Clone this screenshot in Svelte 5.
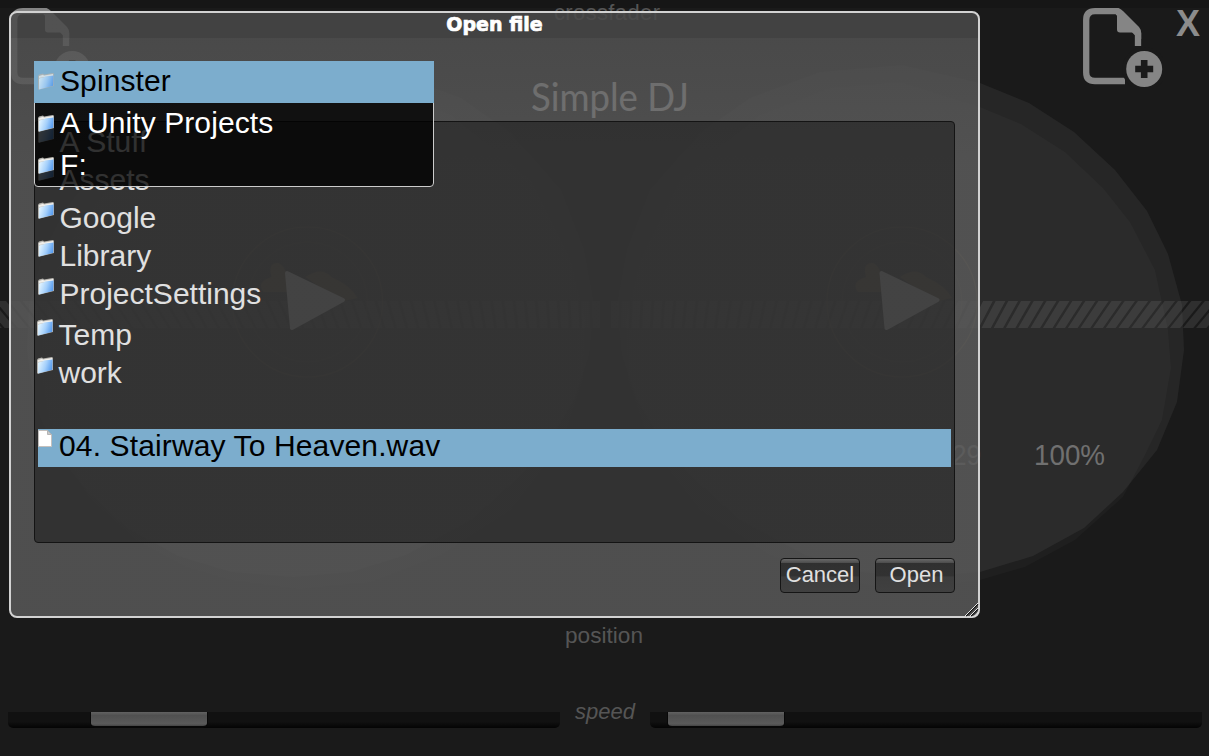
<script lang="ts">
	const places = ['Spinster', 'A Unity Projects', 'F:'];
	const folders = ['A Stuff', 'Assets', 'Google', 'Library', 'ProjectSettings'];
	const moreFolders = ['Temp', 'work'];
	const files = ['04. Stairway To Heaven.wav'];

	let place = $state('Spinster');
	let selected = $state('04. Stairway To Heaven.wav');

	// distance of each thumb from the left end of its track
	const speeds = [82, 17];

	// the waveform bars lean more the further they are from the middle
	const top = (i: number) => 611 + 10.7 * i + 0.029 * i * i;
	const lean = (x: number) => x - (x - 611) * 0.037;
	const bars = Array.from({ length: 54 }, (_, i) => {
		const a = top(i);
		const b = top(i + 1) - 2.9;
		return `${a},301 ${b},301 ${lean(b)},328 ${lean(a)},328`;
	});
</script>

{#snippet folderIcon()}
	<svg class="icon" width="16" height="17" viewBox="0 0 16 17">
		<defs>
			<linearGradient id="folder" x1="0" y1="0.35" x2="1" y2="0.65">
				<stop offset="0" stop-color="#e4f5ff" />
				<stop offset="0.5" stop-color="#a5d0fb" />
				<stop offset="1" stop-color="#4e96ee" />
			</linearGradient>
		</defs>
		<path d="M0 3 L1 1.5 L5 0.6 L6 1.4 L14.8 0 L16 0.8 V13 L1 16.8 L0 16.3Z" fill="#b5b3ae" />
		<path d="M1 2.9 L5 1.8 L6 2.5 L15 1 V3 L1 5Z" fill="#f0efeb" />
		<path d="M1 5.4 L6 4.3 L7 3.4 L15.6 2.4 L15.2 12.8 L1 16.4Z" fill="url(#folder)" />
	</svg>
{/snippet}

{#snippet addFileIcon()}
	<svg class="add-file" width="80" height="79" viewBox="0 0 80 79">
		<path
			d="M42 73 H12 Q3.2 73 3.2 64.4 V12 Q3.2 3.2 12 3.2 H34 L55 26 V38"
			fill="none"
			stroke="#858585"
			stroke-width="6.3"
		/>
		<path d="M34 0 L36.5 0.4 Q38 1 40 3 L56 19 Q58.2 21.5 58.2 25 V31 L52 24.6 H37 Q34 24.6 34 21.6Z" fill="#858585" />
		<circle cx="61.2" cy="61" r="22" fill="#1a1a1a" />
		<circle cx="61.2" cy="61" r="18" fill="#858585" />
		<path d="M61.2 52 V70 M52.2 61 H70.2" stroke="#1a1a1a" stroke-width="6.6" />
	</svg>
{/snippet}

{#snippet deck()}
	<polygon
		class="platter-shade"
		points="900,82 980,107 1021,124 1065,152 1103,188 1130,222 1155,270 1168,330 1171,368 1162,420 1145,455 1123,497 1075,540 1025,567 980,580 912,589 840,582 770,555 700,510 650,445 628,380 626,320 640,260 680,180 760,115 830,88"
	/>
	<polygon
		class="platter"
		points="902,65 980,83 1029,103 1074,132 1115,170 1147,211 1168,254 1182,305 1184,350 1177,402 1157,450 1123,492 1084,528 1033,556 980,572 918,577 860,572 805,555 740,520 690,475 655,430 637,400 622,355 617,305 627,250 650,190 700,133 750,98 820,72"
	/>
	{#each bars as points}
		<polygon class="bar" {points} />
	{/each}
{/snippet}

{#snippet label()}
	<circle cx="902" cy="302" r="75" fill="none" stroke="#8a7244" stroke-width="1.2" opacity="0.35" />
	<circle cx="902" cy="302" r="60" fill="none" stroke="#8a7244" stroke-width="0.8" opacity="0.2" />
	<path
		d="M858 292 Q850 282 866 277 Q862 262 873 263 Q884 268 882 292Z M900 277 Q916 266 926 277 Q946 286 952 298 L935 302Z"
		fill="#8a6a33"
		opacity="0.5"
	/>
	<path d="M881.5 273 L937.5 300 L886.5 328Z" class="play" />
{/snippet}

<main class="app">
	<svg class="scene" width="1209" height="756" viewBox="0 0 1209 756">
		<rect width="1209" height="8" fill="#161616" />
		{@render deck()}
		<g transform="translate(1211 0) scale(-1 1)">{@render deck()}</g>
		{@render label()}
		<g transform="translate(-594.5 0)">{@render label()}</g>
		<text x="554" y="20" class="caption" textLength="106">crossfader</text>
		<text x="531" y="111" class="brand" textLength="158" lengthAdjust="spacingAndGlyphs">Simple DJ</text>
		<text x="952" y="465" class="readout" textLength="29" lengthAdjust="spacingAndGlyphs">29</text>
		<text x="1034" y="465" class="readout" textLength="71" lengthAdjust="spacingAndGlyphs">100%</text>
		<text x="565" y="643" class="caption" textLength="78" lengthAdjust="spacingAndGlyphs">position</text>
	</svg>

	<header class="toolbar">
		{@render addFileIcon()}
		<div class="toolbar-end">
			{@render addFileIcon()}
			<button class="close">X</button>
		</div>
	</header>

	<footer class="speed">
		<div class="track"><div class="thumb" style="margin-left: {speeds[0]}px"></div></div>
		<span class="speed-label">speed</span>
		<div class="track"><div class="thumb" style="margin-left: {speeds[1]}px"></div></div>
	</footer>

	<section class="dialog">
		<h1>Open file</h1>
		<div class="list">
			{#each folders as name}
				<div class="row">{@render folderIcon()}<span>{name}</span></div>
			{/each}
			<div class="group">
				{#each moreFolders as name}
					<div class="row">{@render folderIcon()}<span>{name}</span></div>
				{/each}
			</div>
			{#each files as name}
				<button class="row file" class:selected={selected === name} onclick={() => (selected = name)}>
					<svg class="icon" width="14" height="18" viewBox="0 0 14 18">
						<path d="M0.5 0.5 H9.5 L13.5 4.5 V16.5 H0.5Z" fill="#fff" stroke="#c4c0bd" />
						<path d="M9.5 0.5 V4.5 H13.5Z" fill="#c9c9c9" stroke="#b5b5b5" />
					</svg>
					<span>{name}</span>
				</button>
			{/each}
		</div>
		<div class="actions">
			<button class="action">Cancel</button>
			<button class="action open">Open</button>
		</div>

		<div class="menu">
			{#each places as name}
				<button class="place" class:current={place === name} onclick={() => (place = name)}>
					{@render folderIcon()}<span>{name}</span>
				</button>
			{/each}
		</div>

		<svg class="grip" width="14" height="14" viewBox="0 0 14 14">
			<path d="M1 13 L13 1 M6 13 L13 6" stroke="#111" stroke-width="1.2" />
			<path d="M0 13 L13 0 M5 13 L13 5 M9 13.5 L13.5 9" stroke="#e4e4e4" stroke-width="1" />
		</svg>
	</section>
</main>

<style>
	:global(body) {
		background: #1a1a1a;
		overflow: hidden;
	}

	button {
		padding: 0;
		border: 0;
		background: none;
		color: inherit;
		font: inherit;
		text-align: left;
	}

	.app {
		position: relative;
		display: flex;
		flex-direction: column;
		justify-content: space-between;
		box-sizing: border-box;
		width: 1209px;
		height: 756px;
		font-family: 'Liberation Sans', Arial, sans-serif;
		background: #1a1a1a;
	}

	.scene {
		position: absolute;
		inset: 0;
	}

	.platter-shade {
		fill: rgba(255, 255, 255, 0.024);
	}

	.platter {
		fill: rgba(255, 255, 255, 0.056);
	}

	.bar {
		fill: #888;
		opacity: 0.19;
	}

	.play {
		fill: #fff;
		stroke: #fff;
		stroke-width: 4;
		stroke-linejoin: round;
	}

	.caption {
		fill: #555;
		font-size: 22px;
	}

	.brand {
		fill: #fff;
		font-family: Lato, sans-serif;
		font-size: 39px;
	}

	.readout {
		fill: #707070;
		font-size: 30px;
	}

	.toolbar {
		position: relative;
		display: flex;
		justify-content: space-between;
		padding: 8px 8px 0 11px;
	}

	.toolbar-end {
		display: flex;
		align-items: flex-start;
		gap: 13px;
	}

	.add-file {
		display: block;
	}

	.close {
		width: 25px;
		color: #8c8c8c;
		font-size: 36px;
		font-weight: bold;
		line-height: 31px;
	}

	.speed {
		position: relative;
		display: flex;
		justify-content: space-between;
		align-items: flex-start;
		box-sizing: border-box;
		height: 56px;
		padding: 12px 7px 0 8px;
	}

	.track {
		width: 552px;
		height: 16px;
		border-radius: 0 0 5px 5px;
		background: linear-gradient(#111 60%, #040404);
	}

	.thumb {
		box-sizing: border-box;
		width: 118px;
		height: 16px;
		border: 1px solid #080808;
		border-top: 0;
		border-bottom-width: 2px;
		border-radius: 0 0 5px 5px;
		background: linear-gradient(#626262, #505050 25%, #5a5a5a 85%, #444);
	}

	.speed-label {
		margin-top: -12px;
		color: #555;
		font-size: 22px;
		font-style: italic;
		line-height: 24px;
	}

	.dialog {
		position: absolute;
		left: 9px;
		top: 11px;
		box-sizing: border-box;
		width: 971px;
		height: 607px;
		border: 2px solid #d2d2d2;
		border-radius: 8px;
		background: linear-gradient(rgba(73, 73, 73, 0.85) 25px, rgba(82, 82, 82, 0.85) 25px, rgba(88, 88, 88, 0.85) 150px);
		color: #e0e0e0;
	}

	h1 {
		height: 25px;
		margin: 0 0 83px;
		color: #fff;
		font-family: 'DejaVu Sans', sans-serif;
		font-size: 19px;
		font-weight: bold;
		line-height: 22px;
		text-align: center;
		-webkit-text-stroke: 0.7px #fff;
	}

	.list {
		box-sizing: border-box;
		width: 921px;
		height: 422px;
		margin-left: 23px;
		padding: 3px;
		border: 1px solid #141414;
		border-radius: 4px;
		background: rgba(24, 24, 24, 0.52);
	}

	.row {
		display: flex;
		align-items: flex-start;
		gap: 5.5px;
		width: 100%;
		height: 38px;
		font-size: 30px;
		line-height: 33px;
	}

	.row .icon {
		margin-top: 1px;
	}

	.group {
		margin: 3px 0 35px -1px;
	}

	.file {
		gap: 5px;
		letter-spacing: 0.13px;
	}

	.file .icon {
		margin-right: 2px;
	}

	.selected {
		background: #7cadcd;
		color: #000;
	}

	.actions {
		display: flex;
		justify-content: flex-end;
		gap: 15px;
		margin: 15px 23px 0 0;
	}

	.action {
		box-sizing: border-box;
		width: 80px;
		height: 35px;
		padding-bottom: 2px;
		border: 1px solid #151515;
		border-radius: 4px;
		background: linear-gradient(#686868, #4c4c4c 4px, #303030 4px, #323232 50%, #3d3d3d 55%, #404040);
		font-size: 22px;
		line-height: 31px;
		text-align: center;
	}

	.open {
		padding-left: 3px;
	}

	.menu {
		position: absolute;
		left: 23px;
		top: 48px;
		box-sizing: border-box;
		width: 400px;
		height: 126px;
		border: 1px solid #ccc;
		border-radius: 4px;
		background: rgba(0, 0, 0, 0.78);
		color: #fff;
	}

	.place {
		display: flex;
		align-items: center;
		gap: 6px;
		width: 400px;
		height: 42px;
		margin-left: -1px;
		padding-left: 4px;
		font-size: 30px;
		letter-spacing: 0.1px;
		line-height: 40px;
	}

	.place:first-child {
		margin-top: -1px;
	}

	.place .icon {
		margin-top: -1px;
	}

	.place span {
		height: 42px;
	}

	.current {
		background: #7cadcd;
		color: #000;
	}

	.current .icon {
		opacity: 0.75;
	}

	.grip {
		position: absolute;
		right: -1px;
		bottom: -1px;
	}
</style>
